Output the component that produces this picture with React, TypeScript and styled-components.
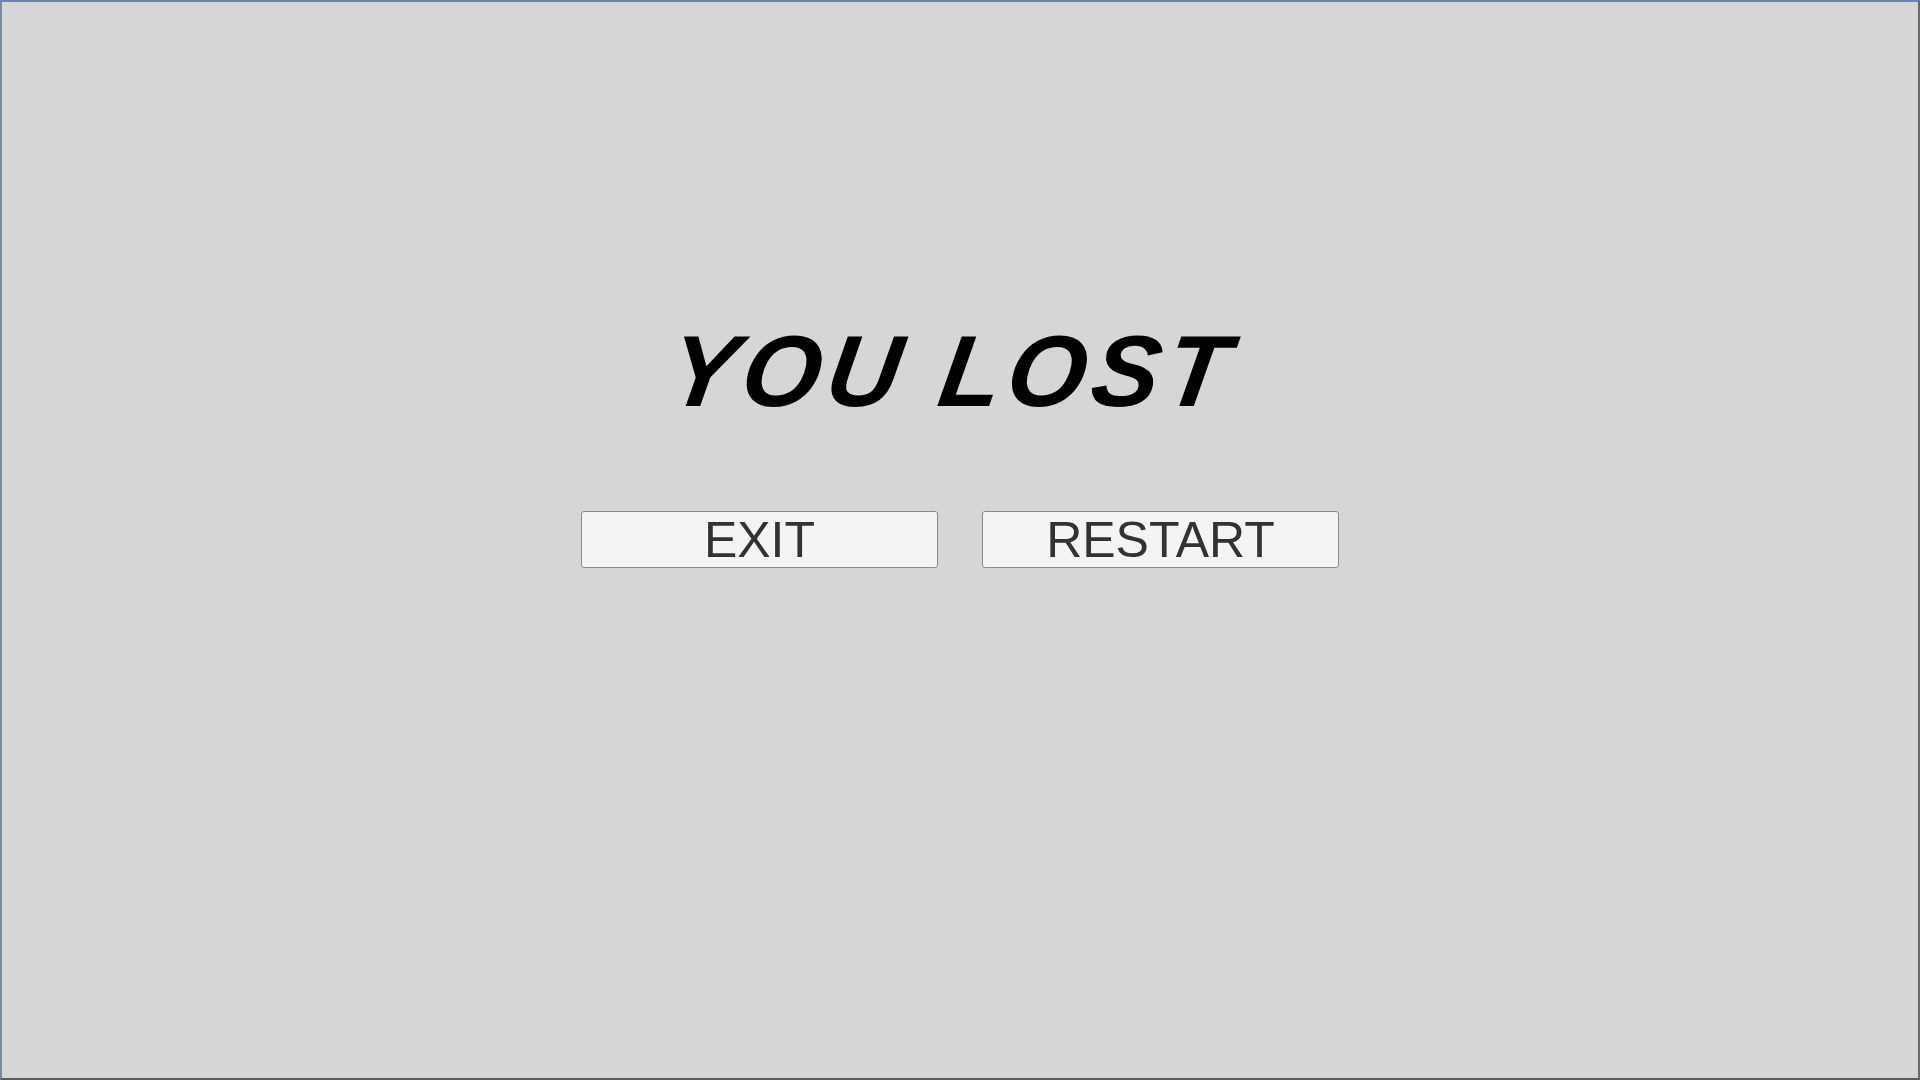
import React from "react";
import styled, { createGlobalStyle } from "styled-components";

const GlobalStyle = createGlobalStyle`
  html, body {
    margin: 0;
    padding: 0;
    background: #d6d6d6;
  }
  * {
    box-sizing: border-box;
  }
`;

const Screen = styled.div`
  width: 1920px;
  height: 1080px;
  background: #d6d6d6;
  border-top: 2px solid #6b83ad;
  border-left: 2px solid #7b8aa0;
  border-right: 2px solid #6a6a6a;
  border-bottom: 2px solid #5c5c5c;
  display: flex;
  flex-direction: column;
  align-items: center;
  padding-top: 313px;
`;

const Title = styled.h1`
  margin: 0 16px 0 0;
  font-family: "Liberation Sans", Arial, sans-serif;
  font-weight: bold;
  font-style: italic;
  font-size: 101px;
  line-height: 112px;
  letter-spacing: 6px;
  color: #000;
  transform: skewX(-9deg);
`;

const ButtonRow = styled.div`
  display: flex;
  gap: 44px;
  margin-top: 84px;
`;

const MenuButton = styled.button`
  width: 357px;
  height: 57px;
  background: #f4f4f4;
  border: 1px solid #8a8a8a;
  border-radius: 3px;
  font-family: "Liberation Sans", Arial, sans-serif;
  font-size: 50px;
  line-height: 1;
  color: #323232;
  padding: 0;
  display: flex;
  align-items: center;
  justify-content: center;
  cursor: pointer;
`;

export default function App() {
  return (
    <>
      <GlobalStyle />
      <Screen>
        <Title>YOU LOST</Title>
        <ButtonRow>
          <MenuButton>EXIT</MenuButton>
          <MenuButton>RESTART</MenuButton>
        </ButtonRow>
      </Screen>
    </>
  );
}
